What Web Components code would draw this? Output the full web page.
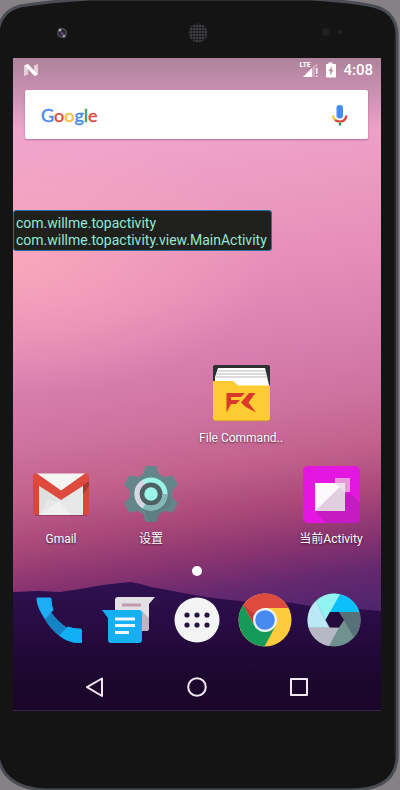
<!DOCTYPE html>
<html lang="zh-CN">
<head>
<meta charset="utf-8">
<meta name="viewport" content="width=device-width, initial-scale=1">
<title>Android home screen</title>
<style>
html, body { margin: 0; min-height: 100%; background: #858184; }
body { font-family: Roboto, "Noto Sans CJK SC", sans-serif; color: #fff; }
</style>
</head>
<body>
<phone-device>
  <phone-screen>
    <status-bar time="4:08"></status-bar>
    <search-box></search-box>
    <activity-overlay package="com.willme.topactivity" activity="com.willme.topactivity.view.MainActivity"></activity-overlay>
    <app-grid>
      <app-icon label="File Command.." style="grid-area: 1 / 3">
        <svg viewBox="0 0 58 58">
          <path d="M1 3q0-2 2-2h53q2 0 2 2v24H1z" fill="#303033"/>
          <path d="M6 4h47l4 17v5H3V13z" fill="#fff"/>
          <path d="M5.500 7h48M4.500 10h50M3.500 13h52" stroke="#b9b5ba" fill="none"/>
          <path d="M1 17h20l5 4.500h32V55q0 2-2 2H3q-2 0-2-2z" fill="#ffcb33"/>
          <path d="M1 55q0 2 2 2h53q2 0 2-2" stroke="#b98b4e" fill="none"/>
          <path d="M14.500 29H33l-4 4H19v3h9l-4 4h-5l-4.500 8.500z" fill="#d8392b"/>
          <path d="M43.500 29H37l-8 9.500 4 4 11 6-7.500-10z" fill="#d8392b"/>
        </svg>
      </app-icon>
      <app-icon label="Gmail" style="grid-area: 2 / 1">
        <svg viewBox="0 0 58 58">
          <rect x="1" y="9" width="56" height="41" rx="3" fill="#dc4537"/>
          <path d="M7 14h44v36H7z" fill="#e5e5e5"/>
          <path d="M7 21l22 17 6 12H7z" fill="#dfdfdf"/><path d="M51 21L29 38 16 34l-9 16h44z" fill="#e9e8e8"/>
          <path d="M7 50l20-14 12 14z" fill="#f0f0f0"/>
          <path d="M4 8.500h50L29 27z" fill="#f4f4f2"/>
          <path d="M1 12q0-4 4-3.500L29 25.500 53 8.500q4-.5 4 3.500v5L29 35 1 17z" fill="#de4b3e"/>
          <path d="M51 20l6-4v5l-6 8z" fill="#a93a30"/>
          <path d="M3 50.500h52" stroke="#75314f" opacity=".55"/>
        </svg>
      </app-icon>
      <app-icon label="设置" style="grid-area: 2 / 2">
        <svg viewBox="0 0 58 58">
          <g fill="#64868b"><circle cx="29" cy="29" r="21.500"/>
            <path d="M20 14l3.500-13h11L38 14z"/>
            <path d="M20 14l3.500-13h11L38 14z" transform="rotate(60 29 29)"/><path d="M20 14l3.500-13h11L38 14z" transform="rotate(120 29 29)"/><path d="M20 14l3.500-13h11L38 14z" transform="rotate(180 29 29)"/><path d="M20 14l3.500-13h11L38 14z" transform="rotate(240 29 29)"/><path d="M20 14l3.500-13h11L38 14z" transform="rotate(300 29 29)"/></g>
          <path d="M41 18l9 16-3 8-8 4-5 11H27L22 43z" fill="#56757a" opacity=".45"/>
          <circle cx="29" cy="29" r="14" fill="none" stroke="#9cf5e9" stroke-width="5"/>
          <path d="M43 29a14 14 0 0 1-21 12.100" fill="none" stroke="#83b8b7" stroke-width="5"/>
          <path d="M22 41.100A14 14 0 0 1 22 16.900" fill="none" stroke="#d9d5e1" stroke-width="5"/>
          <circle cx="29" cy="29" r="9" fill="#9cf5e9" stroke="#4f6163" stroke-width="4.500"/>
        </svg>
      </app-icon>
      <app-icon label="当前Activity" style="grid-area: 2 / 4">
        <svg viewBox="0 0 58 58">
          <rect x="1" y="1" width="57" height="57" rx="5" fill="#e317df"/>
          <path d="M48 27l10 11v15q0 5-5 5H24L13 46z" fill="#c51bc2"/>
          <path d="M13 18h30v28H13z" fill="#e1cfe0"/><path d="M13 18h29L13 46z" fill="#fbf9fb"/>
          <path d="M33 13h15v14h-5v-9H33z" fill="#eb97dc"/><path d="M33 18h10v9z" fill="#f2deef"/>
        </svg>
      </app-icon>
    </app-grid>
    <page-indicator></page-indicator>
    <app-dock>
      <dock-icon label="Phone">
        <svg viewBox="0 0 56 56">
          <path d="M11 24q7 14 18 21l8-8Q26 30 19 20z" fill="#1482c5"/>
          <path d="M5 5.500h13q1.500 0 1.500 1.500.3 7 2 11L13 27Q5 16 4.500 7z" fill="#1cadf5"/>
          <path d="M27 43.500l9-9Q41 36.500 48 36.500q2 0 2 2V51Q37 52 27 43.500z" fill="#10aff3"/>
        </svg>
      </dock-icon>
      <dock-icon label="Messages">
        <svg viewBox="0 0 56 56">
          <path d="M17 5h37l-6 7v24q0 3-3 3H14V8q0-3 3-3z" fill="#e2e0e3"/>
          <path d="M41 19l7 7v10q0 3-3 3h-4z" fill="#bdb6c2"/>
          <path d="M21 13h19" stroke="#bd9aae" stroke-width="3"/>
          <path d="M1 18h37q3 0 3 3v27q0 3-3 3H10q-3 0-3-3V26z" fill="#15aff2"/>
          <path d="M14 27h20M14 33.500h20M14 40.500h14" stroke="#eef7fc" stroke-width="3"/>
        </svg>
      </dock-icon>
      <dock-icon label="Apps">
        <svg viewBox="0 0 56 56"><circle cx="28" cy="28" r="22.500" fill="#f5f4f5"/>
          <g fill="#2c1243"><circle cx="18" cy="23" r="2.600"/><circle cx="28" cy="23" r="2.600"/><circle cx="38" cy="23" r="2.600"/><circle cx="18" cy="33" r="2.600"/><circle cx="28" cy="33" r="2.600"/><circle cx="38" cy="33" r="2.600"/></g></svg>
      </dock-icon>
      <dock-icon label="Chrome">
        <svg viewBox="0 0 56 56"><circle cx="28" cy="28" r="26.500" fill="#ffca3e"/>
          <path d="M28 16h23.700A26.500 26.500 0 0 0 6.300 13l11 20z" fill="#dc4b3e"/>
          <path d="M6.300 13A26.500 26.500 0 0 0 27.500 54.500L38.500 34 28 36l-11-3z" fill="#159a5b"/>
          <path d="M6.300 13l11 20 1-10z" fill="#c43d35"/>
          <circle cx="28" cy="28" r="12" fill="#edf3fb"/><circle cx="28" cy="28" r="9.800" fill="#468af0"/></svg>
      </dock-icon>
      <dock-icon label="Camera">
        <svg viewBox="0 0 56 56"><circle cx="28" cy="28" r="26.500" fill="#6f918f"/>
          <path d="M34 2.200A26.500 26.500 0 0 1 53.500 20H23z" fill="#0cc0fb"/>
          <path d="M53.500 20A26.500 26.500 0 0 1 48 45.500L33 20z" fill="#587178"/>
          <path d="M2.500 35.500A26.500 26.500 0 0 0 23 54L33 35.500z" fill="#b8b7c5"/>
          <path d="M10 9A26.500 26.500 0 0 0 2.500 35.500H23z" fill="#bbe8f5"/>
          <path d="M34 2.200A26.500 26.500 0 0 0 10 9L19.500 28z" fill="#93f3f3"/>
          <path d="M24 20h9l5 8-5 7.500h-9L19.500 28z" fill="#230c3a"/></svg>
      </dock-icon>
    </app-dock>
    <nav-bar></nav-bar>
  </phone-screen>
</phone-device>

<script>
const define = (name, markup, setup) => {
  const template = document.createElement('template');
  template.innerHTML = markup;
  customElements.define(name, class extends HTMLElement {
    constructor() {
      super();
      this.attachShadow({ mode: 'open' }).append(template.content.cloneNode(true));
    }
    connectedCallback() { if (setup) setup(this, this.shadowRoot); }
  });
};

define('phone-device', `
<style>
:host { display: grid; grid-template-rows: 58px 1fr 79px; grid-template-columns: 13px 1fr 19px; min-height: 100vh; position: relative; overflow: hidden; }
.shell { position: absolute; inset: 0; width: 100%; height: 100%; }
.top { grid-area: 1 / 2; display: grid; grid-template-columns: 1fr auto 1fr; align-items: center; padding: 8px 38px 0 40px; position: relative; }
.top svg { display: block; }
.top svg:last-child { justify-self: end; }
slot { display: grid; grid-area: 2 / 2; position: relative; }
</style>
<svg class="shell" viewBox="0 0 400 790" preserveAspectRatio="none" aria-hidden="true">
  <path d="M-2 34Q-1 12 20 6 50 1 90-1H310Q350 1 373 6 396 11 397 34V757Q396 790 350 790H45Q4 788-2 757z" fill="#141414" stroke="#4b4d54" stroke-width="3"/>
  <path d="M395 34V757" stroke="#25262a" stroke-width="1"/>
</svg>
<div class="top" aria-hidden="true">
  <svg width="18" height="14" viewBox="0 0 18 14"><circle cx="9" cy="7" r="5" fill="#4c4b51"/><circle cx="9" cy="7" r="3.500" fill="#2b2035"/><circle cx="9" cy="7.500" r="1.500" fill="#694282"/><circle cx="7" cy="4" r="1.500" fill="#aaa9ad"/><circle cx="11" cy="10" r="1.500" fill="#99989c"/></svg>
  <svg width="20" height="20" viewBox="0 0 20 20"><defs><pattern id="mesh" width="3" height="3" patternUnits="userSpaceOnUse"><rect width="3" height="3" fill="#48484c"/><circle cx="1.500" cy="1.500" r="1.200" fill="#17171a"/></pattern></defs><circle cx="10" cy="10" r="9.500" fill="url(#mesh)"/></svg>
  <svg width="26" height="10" viewBox="0 0 26 10"><circle cx="9" cy="4" r="4" fill="#20201c"/><circle cx="23" cy="4" r="2.500" fill="#222220"/></svg>
</div>
<slot></slot>`);

define('phone-screen', `
<style>
:host { display: grid; min-height: 600px; background: #1a0628; position: relative; isolation: isolate; overflow: hidden; }
.wallpaper { position: absolute; inset: 0; z-index: -1; background:
  linear-gradient(to bottom, rgba(96,90,96,.46), rgba(120,100,115,.28) 38px, transparent 72px),
  radial-gradient(ellipse 260px 130px at 0 205px, rgba(252,170,188,.8), transparent),
  linear-gradient(171deg, #f0a5ce 0, #f0a4cc 14%, #eb98be 26%, #e58db8 36%, #d77eae 47%, #ce719f 55%, #c2628c 62%, #a94879 69%, #883370 75%, #64286f 80%, #51256e 85%, #4b246a 100%); }
.wallpaper svg { width: 100%; height: 100%; display: block; }
.content { display: flex; flex-direction: column; }
</style>
<div class="wallpaper"><svg viewBox="0 0 368 653" preserveAspectRatio="none" aria-hidden="true">
  <defs><linearGradient id="hill" x1="0" y1="0" x2="0" y2="1"><stop offset="0" stop-color="#301050"/><stop offset=".35" stop-color="#270b43"/><stop offset=".75" stop-color="#1c072d"/><stop offset="1" stop-color="#1a0628"/></linearGradient></defs>
  <path d="M0 534L25 533 47 534 67 531 90 527 107 525 118 524 128 526 138 529 155 532 170 535 193 539 217 542 247 545 267 544 280 545 297 548 318 551 345 551 368 553V653H0z" fill="url(#hill)"/>
  <path d="M0 652.500H368" stroke="#39204a"/>
</svg></div>
<main class="content"><slot></slot></main>`);

define('status-bar', `
<style>
:host { display: flex; align-items: center; justify-content: space-between; height: 24px; padding: 0 8px 0 10px; }
.right { display: flex; align-items: center; }
svg { display: block; }
.net { display: flex; position: relative; margin-right: 6px; }
.net span { position: absolute; left: 0; top: 0; font: 700 7px/8px Roboto, sans-serif; }
time { font-size: 15px; line-height: 24px; font-weight: 500; margin-left: 6px; }
</style>
<svg width="16" height="14" viewBox="0 0 16 14" role="img" aria-label="Android N"><path d="M1 2.500L5 1V11.500L1 13zM11 2.500L15 1V11.500L11 13z" fill="#e5cfdb"/><path d="M1.500 2.500L5 1 15 11.500 11.500 13z" fill="#fff"/></svg>
<div class="right">
  <div class="net"><svg width="20" height="18" viewBox="0 0 20 18" role="img" aria-label="Mobile signal"><path d="M4 16L18 2v14z" fill="#d4a8c0"/><path d="M4 16l9-9V16z" fill="#fff"/><path d="M16 6h4v11h-4z" fill="#b9879f"/><path d="M17 7h1.500v6H17zM17 14.500h1.500V16H17z" fill="#fff"/></svg><span>LTE</span></div>
  <svg width="12" height="16" viewBox="0 0 12 16" role="img" aria-label="Charging"><path d="M3.500 2V.5h4V2H10q1 0 1 1v11.500q0 1-1 1H2q-1 0-1-1V3q0-1 1-1z" fill="#fff"/><path d="M7 4L3.500 9H5.500L5 13.500 8.500 8H6.500z" fill="#b58ba1"/></svg>
  <time></time>
</div>`, (host, root) => { root.querySelector('time').textContent = host.getAttribute('time'); });

define('search-box', `
<style>
:host { display: block; margin: 8px 13px 0 12px; }
form { display: flex; align-items: center; height: 49px; padding: 0 16px; background: #fff; border-radius: 2px; box-shadow: 0 1px 2px rgba(90,30,70,.4); }
label { font: 400 18px/24px Lato, sans-serif; -webkit-text-stroke: .4px currentColor; }
.b { color: #4688ec; } .r { color: #dc4b40; } .y { color: #fcc032; } .g { color: #2f9565; }
input { flex: 1; min-width: 0; border: 0; outline: 0; background: none; font: 16px Roboto, sans-serif; padding: 0 8px; }
button { border: 0; padding: 0; background: none; display: block; }
svg { display: block; }
</style>
<form role="search">
  <label for="q"><span class="b">G</span><span class="r">o</span><span class="y">o</span><span class="b">g</span><span class="g">l</span><span class="r">e</span></label>
  <input id="q" type="text">
  <button type="button" aria-label="Voice search"><svg width="24" height="24" viewBox="0 0 24 24">
    <rect x="8.500" y="2" width="6.500" height="13.500" rx="3" fill="#438bf2"/>
    <path d="M5 12.500Q5 15 7 17" stroke="#fbbf32" stroke-width="2.200" fill="none"/>
    <path d="M7 17Q9 18.500 12 18.500 17.500 18.500 18.500 12.500" stroke="#dd4438" stroke-width="2.200" fill="none"/>
    <path d="M12 19.500V22.500" stroke="#30965d" stroke-width="2.400"/></svg></button>
</form>`);

define('activity-overlay', `
<style>
:host { display: block; align-self: flex-start; margin-top: 71px; padding: 4px 4px 1px 2px; border: 1px solid #2470a0; border-radius: 3px; background: #20211d; color: #96e6d4; font-size: 14px; line-height: 17px; white-space: nowrap; }
</style>
<div class="p"></div><div class="a"></div>`, (host, root) => {
  root.querySelector('.p').textContent = host.getAttribute('package');
  root.querySelector('.a').textContent = host.getAttribute('activity');
});

define('app-grid', `
<style>
:host { display: grid; grid-template-columns: repeat(4, 1fr); grid-template-rows: 101px 101px; margin-top: auto; padding: 0 5px 0 3px; }
</style><slot></slot>`);

define('app-icon', `
<style>
:host { display: block; }
button { width: 100%; border: 0; padding: 5px 0 0; background: none; color: #fff; display: flex; flex-direction: column; align-items: center; gap: 8px; font: 12px/16px Roboto, "Noto Sans CJK SC", sans-serif; text-shadow: 0 1px 2px rgba(0,0,0,.6); white-space: nowrap; }
::slotted(svg) { width: 58px; height: 58px; display: block; }
</style>
<button type="button"><slot></slot><span></span></button>`, (host, root) => {
  root.querySelector('span').textContent = host.getAttribute('label');
});

define('page-indicator', `
<style>
:host { display: flex; justify-content: center; align-items: center; height: 20px; }
i { width: 10px; height: 10px; border-radius: 50%; background: #fff; }
</style><i></i>`);

define('app-dock', `
<style>
:host { display: grid; grid-template-columns: repeat(5, 1fr); align-items: center; height: 78px; padding: 0 13px 4px 13px; }
</style><slot></slot>`);

define('dock-icon', `
<style>
:host { display: block; }
button { width: 100%; border: 0; padding: 0; background: none; display: flex; justify-content: center; }
::slotted(svg) { width: 56px; height: 56px; display: block; }
</style><button type="button"><slot></slot></button>`, (host, root) => {
  root.querySelector('button').setAttribute('aria-label', host.getAttribute('label'));
});

define('nav-bar', `
<style>
:host { display: block; }
nav { display: grid; grid-template-columns: repeat(3, 1fr); height: 48px; padding: 0 31px; }
button { border: 0; padding: 0; background: none; display: flex; align-items: center; justify-content: center; }
svg { width: 24px; height: 24px; fill: none; stroke: #f1e9ef; stroke-width: 2; stroke-linejoin: round; }
</style>
<nav aria-label="System">
  <button type="button" aria-label="Back"><svg viewBox="0 0 24 24"><path d="M19 3.500V21L4 12.200z"/></svg></button>
  <button type="button" aria-label="Home"><svg viewBox="0 0 24 24"><circle cx="12" cy="12" r="8.800"/></svg></button>
  <button type="button" aria-label="Recent apps"><svg viewBox="0 0 24 24"><path d="M4 4h16v16H4z"/></svg></button>
</nav>`);
</script>
</body>
</html>
